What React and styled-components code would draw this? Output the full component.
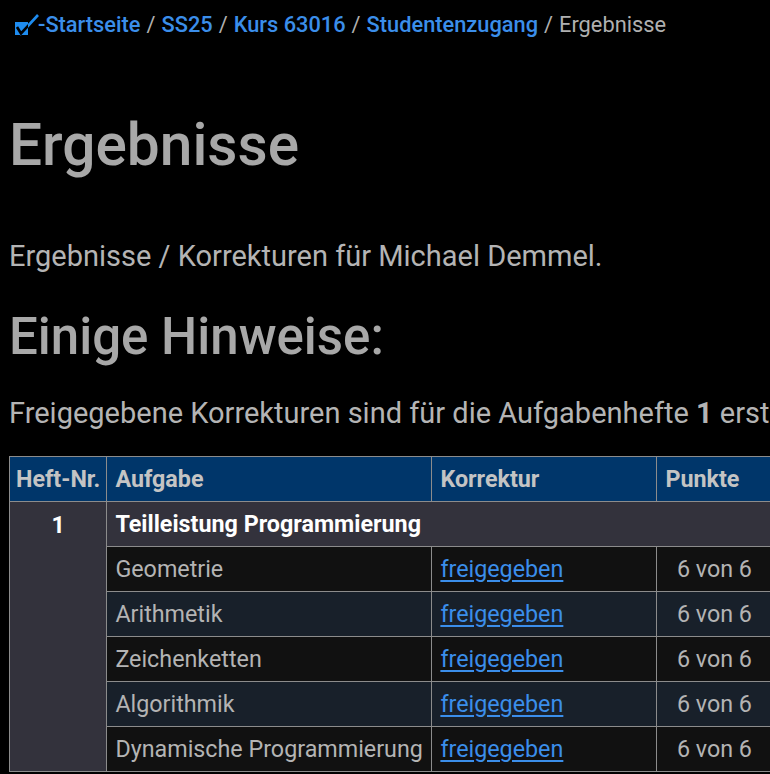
import styled, { createGlobalStyle } from "styled-components";

const Global = createGlobalStyle`
  html, body {
    margin: 0;
    background: #000;
    overflow: hidden;
  }
  body {
    font-family: Roboto, "Liberation Sans", sans-serif;
    color: #b4b4b4;
  }
`;

const Page = styled.div`
  padding: 0 0 0 9px;
  width: 1200px;
`;

const Crumbs = styled.nav`
  display: flex;
  align-items: center;
  gap: 6px;
  padding: 12px 0 0 6px;
  font-size: 21.8px;
  line-height: 26px;
  color: #b0b0b0;
  white-space: nowrap;
`;

const CrumbLink = styled.a`
  color: #3b8eea;
  font-weight: 500;
  text-decoration: none;
`;

const Check = styled.svg`
  width: 24px;
  height: 26px;
  margin-right: -7px;
`;

const Title = styled.h1`
  margin: 74px 0 0;
  font-size: 58.6px;
  font-weight: 500;
  line-height: 66px;
  color: #a8a8a8;
`;

const Text = styled.p`
  margin: ${(p) => p.$top || 0}px 0 0;
  font-size: 29px;
  line-height: 36px;
  color: #b4b4b4;
  white-space: nowrap;
`;

const Sub = styled.h2`
  margin: 33px 0 0;
  font-size: 51px;
  font-weight: 500;
  line-height: 60px;
  color: #a8a8a8;
`;

const Table = styled.table`
  margin-top: 25px;
  border-collapse: collapse;
  font-size: 23.3px;
`;

const Th = styled.th`
  background: #00366a;
  color: #c4c4c4;
  font-weight: 700;
  text-align: left;
  height: 44px;
  padding: 0 ${(p) => p.$pad || 8}px;
  border: 1px solid #8c8c8c;
  width: ${(p) => p.$w}px;
  white-space: nowrap;
`;

const NrCell = styled.td`
  background: #33323c;
  color: #fff;
  font-weight: 700;
  text-align: center;
  vertical-align: top;
  padding: 9px 6px 0;
  border: 1px solid #8c8c8c;
`;

const GroupCell = styled.td`
  background: #33323c;
  color: #fff;
  font-weight: 700;
  height: 44px;
  padding: 0 8px;
  border: 1px solid #8c8c8c;
  border-left: none;
`;

const Row = styled.tr`
  background: ${(p) => (p.$odd ? "#18202a" : "#111111")};
`;

const Td = styled.td`
  height: 44px;
  padding: 0 8px;
  color: #b4b4b4;
  border: 1px solid #8c8c8c;
  white-space: nowrap;
`;

const Link = styled.a`
  color: #3b8eea;
  text-decoration: underline;
  text-underline-offset: 3px;
`;

const tasks = ["Geometrie", "Arithmetik", "Zeichenketten", "Algorithmik", "Dynamische Programmierung"];

export default function App() {
  return (
    <>
      <Global />
      <Page>
        <Crumbs>
          <Check viewBox="0 0 24 26">
            <defs>
              <clipPath id="box">
                <rect x="0" y="10" width="13" height="13" />
              </clipPath>
            </defs>
            <path d="M2 15 L6 21.5 L23 3" fill="none" stroke="#1e8cf0" strokeWidth="2.6" />
            <rect x="0" y="10" width="13" height="13" fill="#1e8cf0" />
            <path d="M2 15 L6 21.5 L23 3" fill="none" stroke="#000" strokeWidth="2.6" clipPath="url(#box)" />
          </Check>
          <CrumbLink href="#">-Startseite</CrumbLink>/
          <CrumbLink href="#">SS25</CrumbLink>/
          <CrumbLink href="#">Kurs 63016</CrumbLink>/
          <CrumbLink href="#">Studentenzugang</CrumbLink>/
          <span>Ergebnisse</span>
        </Crumbs>
        <Title>Ergebnisse</Title>
        <Text $top={60}>Ergebnisse / Korrekturen für Michael Demmel.</Text>
        <Sub>Einige Hinweise:</Sub>
        <Text $top={28}>
          Freigegebene Korrekturen sind für die Aufgabenhefte <b>1</b> erst ab dem angegebenen Datum einsehbar.
        </Text>
        <Table>
          <thead>
            <tr>
              <Th $pad={6}>Heft-Nr.</Th>
              <Th $w={308}>Aufgabe</Th>
              <Th $w={208}>Korrektur</Th>
              <Th $w={160}>Punkte</Th>
            </tr>
          </thead>
          <tbody>
            <tr>
              <NrCell rowSpan={tasks.length + 1}>1</NrCell>
              <GroupCell colSpan={3}>Teilleistung Programmierung</GroupCell>
            </tr>
            {tasks.map((t, i) => (
              <Row key={t} $odd={i % 2 === 1}>
                <Td>{t}</Td>
                <Td>
                  <Link href="#">freigegeben</Link>
                </Td>
                <Td>&nbsp;&nbsp;6 von 6</Td>
              </Row>
            ))}
          </tbody>
        </Table>
      </Page>
    </>
  );
}
